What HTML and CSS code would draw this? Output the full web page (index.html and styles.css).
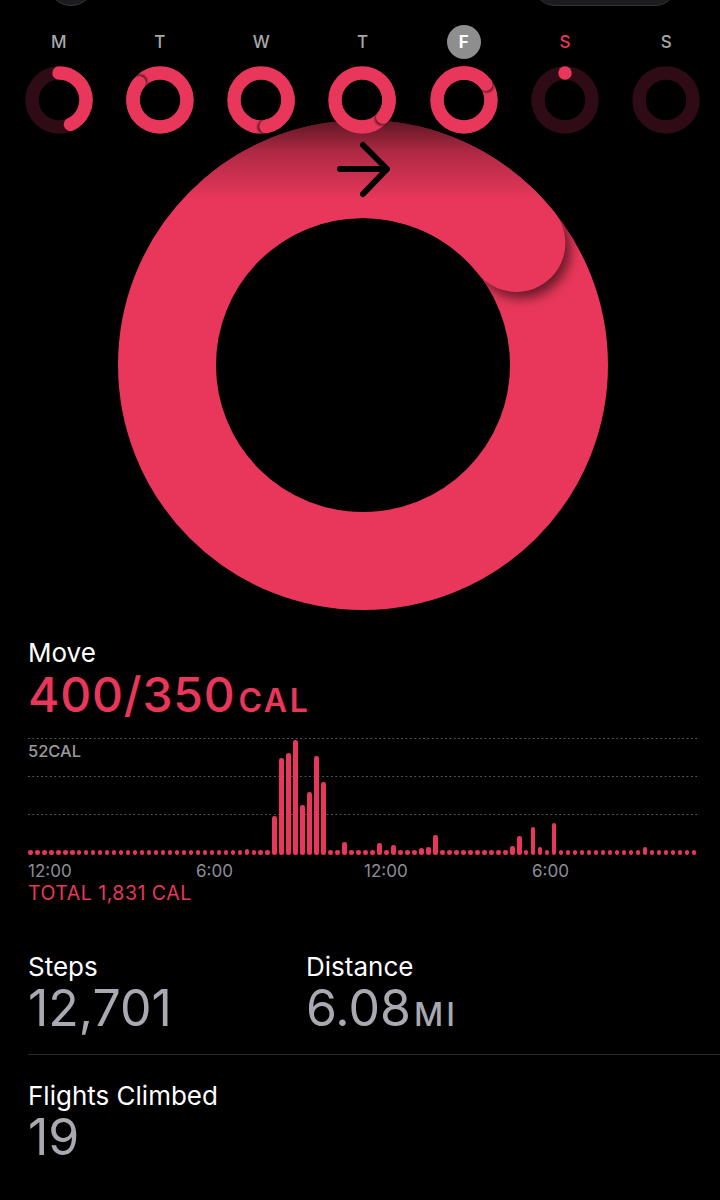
FILE: index.html
```html
<!DOCTYPE html>
<html lang="en">
<head>
  <meta charset="UTF-8" />
  <meta name="viewport" content="width=device-width, initial-scale=1.0"/>
  <title>Activity</title>
  <link rel="stylesheet" href="styles.css">
</head>
<body>

  <div class="top-bar">
    <span class="avatar"></span>
    <span class="pill"></span>
  </div>

  <div class="week" id="week">
    <!-- days are built by the script below -->
  </div>

  <div class="hero" id="hero"></div>

  <section class="move">
    <div class="label">Move</div>
    <div class="big-value red">400/350<span class="unit">CAL</span></div>

    <div class="chart">
      <div class="gridline g1"></div>
      <div class="gridline g2"></div>
      <div class="gridline g3"></div>
      <span class="chart-max">52CAL</span>
      <div class="bars" id="bars"></div>
    </div>

    <div class="hours">
      <span>12:00</span>
      <span>6:00</span>
      <span>12:00</span>
      <span>6:00</span>
    </div>
    <div class="total red">TOTAL 1,831 CAL</div>
  </section>

  <section class="stats">
    <div class="stat">
      <div class="label">Steps</div>
      <div class="value">12,701</div>
    </div>
    <div class="stat">
      <div class="label">Distance</div>
      <div class="value">6.08<span class="unit">MI</span></div>
    </div>
  </section>

  <hr class="divider">

  <section class="stats single">
    <div class="stat">
      <div class="label">Flights Climbed</div>
      <div class="value">19</div>
    </div>
  </section>

  <script>
    const RED = '#e8375a';
    const TRACK = '#2e0b15';

    const days = [
      { name: 'M', pct: 0.43 },
      { name: 'T', pct: 1.86 },
      { name: 'W', pct: 1.47 },
      { name: 'T', pct: 1.36 },
      { name: 'F', pct: 1.15, today: true },
      { name: 'S', pct: 0, current: true },
      { name: 'S', pct: -1 }
    ];

    // point on a circle, 0deg = top, clockwise
    function pt(c, r, deg) {
      const a = deg * Math.PI / 180;
      return [c + r * Math.sin(a), c - r * Math.cos(a)];
    }

    function arc(c, r, from, to) {
      const p0 = pt(c, r, from);
      const p1 = pt(c, r, to);
      const large = (to - from) > 180 ? 1 : 0;
      return `M${p0[0]} ${p0[1]} A${r} ${r} 0 ${large} 1 ${p1[0]} ${p1[1]}`;
    }

    function ring(size, r, w, pct, id, shadow, extra) {
      const c = size / 2;
      let s = `<svg width="${size}" height="${size}" viewBox="0 0 ${size} ${size}">`;
      s += `<defs><filter id="${id}" x="-50%" y="-50%" width="200%" height="200%">
              <feGaussianBlur stdDeviation="${shadow.blur}"/></filter>${extra ? extra.defs : ''}</defs>`;

      if (pct < 1) {
        s += `<circle cx="${c}" cy="${c}" r="${r}" fill="none" stroke="${TRACK}" stroke-width="${w}"/>`;
        if (pct === 0) {
          s += `<circle cx="${c}" cy="${c - r}" r="${w / 2}" fill="${RED}"/>`;
        } else if (pct > 0) {
          s += `<path d="${arc(c, r, 0, pct * 360)}" fill="none" stroke="${RED}" stroke-width="${w}" stroke-linecap="round"/>`;
        }
      } else {
        const end = (pct - 1) * 360;
        const e = pt(c, r, end);
        const a = end * Math.PI / 180;
        const dx = Math.cos(a) * shadow.off;
        const dy = Math.sin(a) * shadow.off;
        s += `<circle cx="${c}" cy="${c}" r="${r}" fill="none" stroke="${RED}" stroke-width="${w}"/>`;
        s += `<circle cx="${e[0] + dx}" cy="${e[1] + dy}" r="${w / 2}" fill="#000" opacity="${shadow.op}" filter="url(#${id})"/>`;
        s += `<path d="${arc(c, r, end - 90, end)}" fill="none" stroke="${RED}" stroke-width="${w}"/>`;
        s += `<circle cx="${e[0]}" cy="${e[1]}" r="${w / 2}" fill="${RED}"/>`;
      }
      if (extra) s += extra.body;
      return s + '</svg>';
    }

    // week row
    const week = document.getElementById('week');
    days.forEach((d, i) => {
      const el = document.createElement('div');
      el.className = 'day';
      let cls = 'day-label';
      if (d.today) cls += ' today';
      if (d.current) cls += ' red';
      el.innerHTML = `<span class="${cls}">${d.name}</span>` +
        ring(68, 27, 13.5, d.pct, 'sh' + i, { blur: 1.2, off: 2, op: 0.6 });
      week.appendChild(el);
    });

    // big ring
    const heroExtra = {
      defs: `<linearGradient id="fade" x1="0" y1="0" x2="0" y2="1">
               <stop offset="0" stop-color="#000" stop-opacity="0.6"/>
               <stop offset="0.4" stop-color="#000" stop-opacity="0.25"/>
               <stop offset="1" stop-color="#000" stop-opacity="0"/>
             </linearGradient>`,
      body: `<rect x="0" y="0" width="490" height="80" fill="url(#fade)"/>
             <path d="M222 49 H268 M245 25 L269 49 L245 74" fill="none" stroke="#000"
                   stroke-width="6" stroke-linecap="round" stroke-linejoin="round"/>`
    };
    document.getElementById('hero').innerHTML =
      ring(490, 196, 98, 1.143, 'bigsh', { blur: 6, off: 8, op: 0.55 }, heroExtra);

    // move chart, one bar per 15 minutes
    const peaks = {
      31: 5.5, 35: 39, 36: 97, 37: 102, 38: 115, 39: 50, 40: 63, 41: 99, 42: 73,
      45: 13, 50: 12, 52: 10, 56: 6.5, 57: 8, 58: 20, 69: 9, 70: 19, 72: 28,
      73: 8, 75: 32, 88: 8
    };
    const bars = document.getElementById('bars');
    for (let i = 0; i < 96; i++) {
      const bar = document.createElement('span');
      bar.className = 'bar';
      bar.style.height = (peaks[i] || 4.6) + 'px';
      bars.appendChild(bar);
    }
  </script>
</body>
</html>
```

FILE: styles.css
```css
body {
  margin: 0;
  width: 720px;
  background-color: #000;
  color: #fff;
  font-family: Inter, "Noto Sans", sans-serif;
}

.red {
  color: #e8375a;
}

/* partially scrolled-off header */
.top-bar {
  display: flex;
  align-items: flex-end;
  height: 6px;
  overflow: hidden;
}

.avatar {
  flex: none;
  width: 44px;
  height: 44px;
  margin-left: 48px;
  border-radius: 50%;
  background: #1c1c1e;
  border: 1px solid #3a3a3c;
}

.pill {
  flex: none;
  width: 142px;
  height: 42px;
  margin-left: auto;
  margin-right: 43px;
  border-radius: 22px;
  background: #1c1c1e;
  border: 1px solid #333336;
}

/* week rings */
.week {
  position: relative;
  z-index: 1;
  display: grid;
  grid-template-columns: repeat(7, 1fr);
  padding: 0 3px 0 8px;
  margin-top: 19px;
}

.day {
  display: flex;
  flex-direction: column;
  align-items: center;
  gap: 7px;
}

.day svg {
  display: block;
}

.day-label {
  height: 34px;
  line-height: 34px;
  font-size: 17px;
  font-weight: 500;
  color: #a8a8a8;
}

.day-label.today {
  width: 34px;
  border-radius: 50%;
  background: #8e8e8e;
  color: #fff;
  text-align: center;
  font-weight: 700;
}

.day-label.red {
  color: #e8375a;
}

.hero {
  margin: -14px 0 0 118px;
}

.hero svg {
  display: block;
}

/* move section */
.move {
  padding-left: 28px;
  margin-top: 27.5px;
}

.label {
  font-size: 26px;
  line-height: 30px;
  color: #fff;
}

.big-value {
  margin-top: 1px;
  font-size: 48px;
  line-height: 52px;
  font-weight: 500;
  letter-spacing: 0.8px;
}

.unit {
  font-size: 32px;
  line-height: 1;
  font-weight: 600;
  letter-spacing: 2.5px;
  margin-left: 3px;
}

.chart {
  position: relative;
  width: 672px;
  height: 116.5px;
  margin-top: 17.5px;
}

.gridline {
  position: absolute;
  left: 0;
  right: 0;
  height: 1.3px;
  background: linear-gradient(to right, #5a5a5e 0 1.4px, transparent 1.4px) 0 0 / 4.4px 1.3px repeat-x;
}

.g1 { top: 0; }
.g2 { top: 38px; }
.g3 { top: 76px; }

.chart-max {
  position: absolute;
  top: 4px;
  left: 0;
  font-size: 16.5px;
  line-height: 18px;
  font-weight: 500;
  color: #9a9a9e;
}

.bars {
  position: relative;
  display: flex;
  align-items: flex-end;
  height: 100%;
}

.bar {
  flex: none;
  width: 4.6px;
  margin-right: 2.4px;
  border-radius: 2.3px;
  background: #e8375a;
}

.hours {
  display: grid;
  grid-template-columns: repeat(4, 168px);
  margin-top: 6px;
  font-size: 17px;
  line-height: 20px;
  color: #8e8e93;
}

.total {
  margin-top: 1.4px;
  font-size: 19.5px;
  line-height: 22px;
  letter-spacing: 0.5px;
}

/* stats */
.stats {
  display: grid;
  grid-template-columns: 278px 1fr;
  padding-left: 28px;
  margin-top: 48px;
}

.stats.single {
  margin-top: 26.5px;
}

.value {
  font-size: 50px;
  line-height: 52px;
  color: #a8a9b1;
}

.value .unit {
  margin-left: 3px;
  font-weight: 500;
  letter-spacing: 3px;
}

.divider {
  margin: 20px 0 0 28px;
  border: none;
  border-top: 1px solid #2c2c2e;
}
```
